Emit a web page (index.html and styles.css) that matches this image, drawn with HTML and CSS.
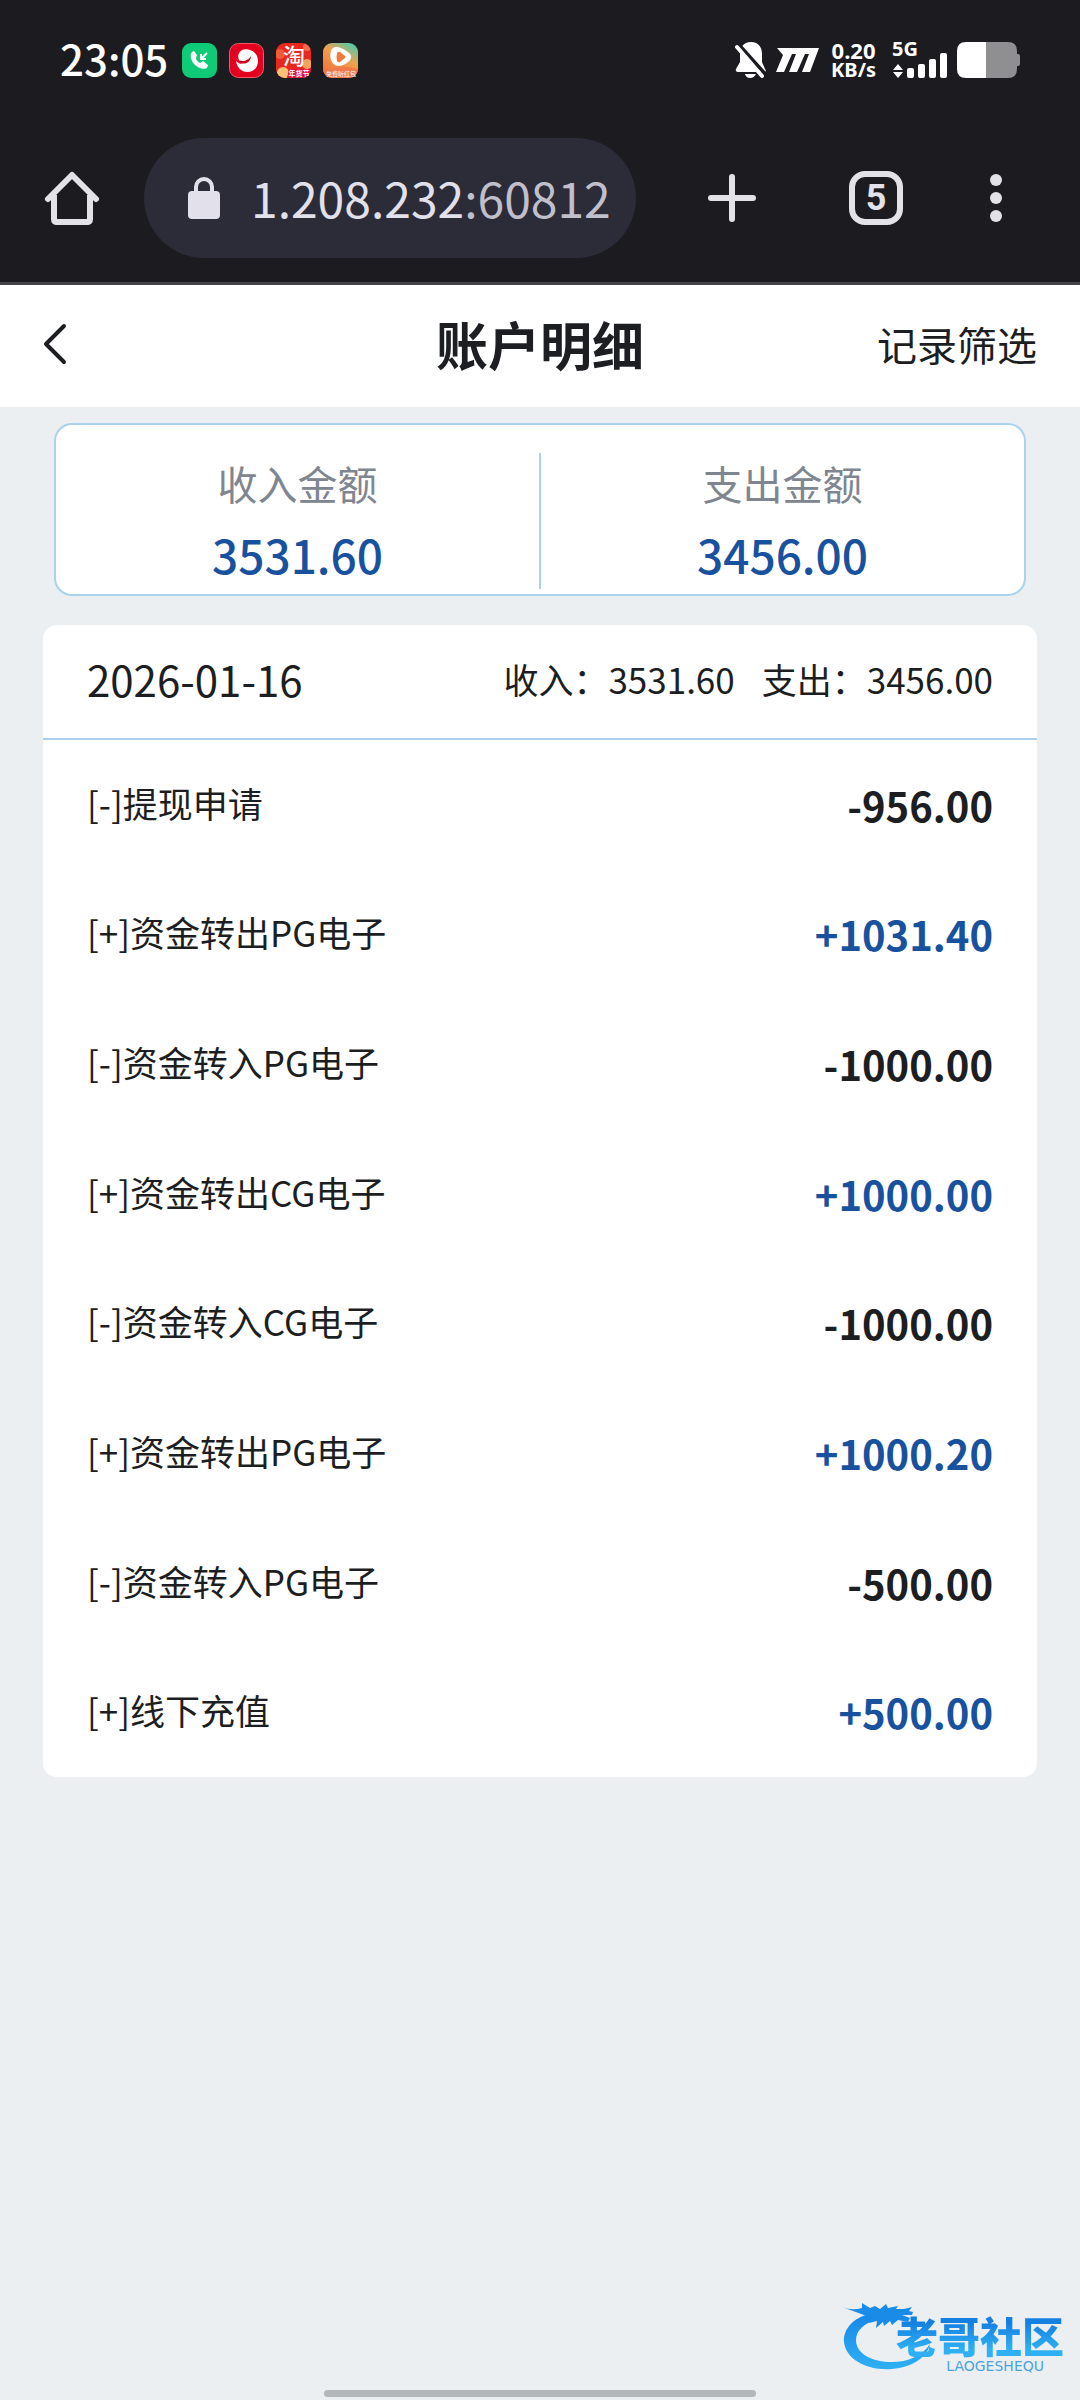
FILE: index.html
```html
<!DOCTYPE html>
<html lang="zh-CN">
<head>
<meta charset="utf-8">
<meta name="viewport" content="width=device-width, initial-scale=1">
<title>账户明细</title>
<link rel="stylesheet" href="styles.css">
</head>
<body>
<div class="screen">
  <div class="status-bar">
    <span class="clock">23:05</span>
    <div class="app-icons">
      <svg width="35" height="35" viewBox="0 0 35 35" aria-hidden="true">
        <rect width="35" height="35" rx="9" fill="#0fcb78"/>
        <path d="M10 9c-2 2-2 7 2 12 4 4 9 6 13 4l1-3-5-4-3 2c-2-1-4-3-4-5l1-3-3-4z" fill="#fff"/>
        <path d="M25 10l-5 5m-1-4v5h5" fill="none" stroke="#fff" stroke-width="2"/>
      </svg>
      <svg width="35" height="35" viewBox="0 0 35 35" aria-hidden="true">
        <rect x="0.500" y="0.500" width="34" height="34" rx="9" fill="#e60020" stroke="#ee5a66"/>
        <path d="M13 7C17 5 29 7 29 18c0 7-5 11-11 11-5 0-10-4-11-11 2 2 4 3 6 3C9 18 7 11 13 7z" fill="#fff"/>
        <path d="M9 17c5 2 10 1 13-4 0 6-6 10-12 6z" fill="#d0001c"/>
      </svg>
      <svg width="35" height="35" viewBox="0 0 35 35" aria-hidden="true">
        <defs>
          <clipPath id="tile"><rect width="35" height="35" rx="9"/></clipPath>
          <linearGradient id="sunset" x1="0.900" y1="0" x2="0.300" y2="1">
            <stop offset="0" stop-color="#3fd0b4"/><stop offset="0.450" stop-color="#f2a04e"/><stop offset="1" stop-color="#f2703a"/>
          </linearGradient>
        </defs>
        <g clip-path="url(#tile)">
          <rect width="35" height="35" fill="#e8281e"/>
          <circle cx="4" cy="11" r="5" fill="#f25a3a"/>
          <circle cx="31" cy="21" r="5" fill="#f7a25a"/>
          <circle cx="7" cy="30" r="6" fill="#fbc277"/>
          <circle cx="31" cy="4" r="4" fill="#f56a48"/>
          <path d="M13 26h22v9H11z" fill="#e0103c"/>
        </g>
        <text x="18" y="21" class="tao" text-anchor="middle">淘</text>
        <text x="23" y="33" class="tao-sub" text-anchor="middle">年货节</text>
      </svg>
      <svg width="35" height="35" viewBox="0 0 35 35" aria-hidden="true">
        <g clip-path="url(#tile)">
          <rect width="35" height="35" fill="url(#sunset)"/>
          <path d="M0 27q17-6 35-1v9H0z" fill="#f07a48"/>
          <path d="M8 8c1-5 7-5 12-2s9 5 8 9-8 8-12 8-7-3-8-6-1-6 0-9z" fill="#fff"/>
          <path d="M14 10q1-2 3-1l5 4q1 1 0 2l-5 4q-2 1-3-1-1-4 0-8z" fill="#ee7a3c"/>
        </g>
        <text x="18" y="33" class="tile-sub" text-anchor="middle">免费听红包</text>
      </svg>
    </div>
    <div class="indicators">
      <svg width="32" height="36" viewBox="0 0 32 36" aria-hidden="true">
        <path d="M16 0C8 0 5 6 5 12v8l-4 7q-1 3 2 3h26q3 0 1-3l-3-7v-8C27 6 24 0 16 0z" fill="#fff"/>
        <path d="M10 32h11q-2 4-6 4t-5-4z" fill="#fff"/>
        <path d="M4 3l26 29" stroke="#1b1b20" stroke-width="4"/>
        <path d="M2 5l25 29" stroke="#fff" stroke-width="4" stroke-linecap="round"/>
      </svg>
      <svg width="43" height="24" viewBox="0 0 43 24" aria-hidden="true">
        <path d="M1 0h42l-9 24h-8l7-18h-4l-8 18h-8l7-18h-4L8 24H0L7 7z" fill="#fff"/>
      </svg>
      <div class="net-speed"><span class="net-value">0.20</span><span class="net-unit">KB/s</span></div>
      <div class="signal">
        <span class="net-type">5G</span>
        <svg width="56" height="36" viewBox="0 0 56 36" aria-hidden="true">
          <path d="M1 28l5-6 5 6zM1 30h10l-5 6z" fill="#fff"/>
          <rect x="15" y="26" width="7" height="10" rx="2" fill="#fff"/>
          <rect x="26" y="22" width="7" height="14" rx="2" fill="#fff"/>
          <rect x="37" y="17" width="7" height="19" rx="2" fill="#fff"/>
          <rect x="48" y="11" width="7" height="25" rx="2" fill="#fff"/>
        </svg>
      </div>
      <svg width="63" height="36" viewBox="0 0 63 36" aria-hidden="true">
        <path d="M29 0h22q9 0 9 9v3h1q2 0 2 2v8q0 2-2 2h-1v3q0 9-9 9H29z" fill="#8f8f91"/>
        <path d="M9 0h20v36H9q-9 0-9-9V9q0-9 9-9z" fill="#fff"/>
      </svg>
    </div>
  </div>

  <div class="browser-bar">
    <button class="icon-button" type="button" aria-label="主页">
      <svg width="54" height="54" viewBox="0 0 54 54" aria-hidden="true">
        <path d="M9 24v24q0 3 3 3h30q3 0 3-3V24" fill="none" stroke="#e3e2e9" stroke-width="6"/>
        <path d="M3 28L27 4l24 24" fill="none" stroke="#e3e2e9" stroke-width="6" stroke-linecap="round" stroke-linejoin="round"/>
      </svg>
    </button>
    <a class="address" href="#">
      <svg width="32" height="42" viewBox="0 0 32 42" aria-hidden="true">
        <rect y="14" width="32" height="28" rx="4" fill="#e2e0ea"/>
        <path d="M8 16V10a8 8 0 0 1 16 0v6" fill="none" stroke="#e2e0ea" stroke-width="4"/>
      </svg>
      <span class="url">1.208.232<span class="port">:60812</span></span>
    </a>
    <div class="browser-actions">
      <button class="icon-button" type="button" aria-label="新建标签页">
        <svg width="48" height="48" viewBox="0 0 48 48" aria-hidden="true">
          <path d="M24 3v42M3 24h42" stroke="#e3e2e9" stroke-width="6" stroke-linecap="round"/>
        </svg>
      </button>
      <button class="tab-count" type="button" aria-label="5 个标签页">5</button>
      <button class="icon-button" type="button" aria-label="更多">
        <svg width="12" height="48" viewBox="0 0 12 48" aria-hidden="true">
          <g fill="#e3e2e9"><circle cx="6" cy="6" r="6"/><circle cx="6" cy="24" r="6"/><circle cx="6" cy="42" r="6"/></g>
        </svg>
      </button>
    </div>
  </div>

  <header class="page-header">
    <button class="back" type="button" aria-label="返回">
      <svg width="24" height="40" viewBox="0 0 24 40" aria-hidden="true">
        <path d="M21 2L3 20l18 18" fill="none" stroke="#1c1e21" stroke-width="4" stroke-linecap="round" stroke-linejoin="round"/>
      </svg>
    </button>
    <h1 class="title">账户明细</h1>
    <button class="filter" type="button">记录筛选</button>
  </header>

  <main class="content">
    <section class="summary">
      <div class="summary-item"><span class="summary-label">收入金额</span><strong class="summary-value">3531.60</strong></div>
      <div class="summary-item"><span class="summary-label">支出金额</span><strong class="summary-value">3456.00</strong></div>
    </section>

    <section class="day-card">
      <div class="day-head">
        <h2 class="day-date">2026-01-16</h2>
        <div class="day-totals"><span>收入：3531.60</span><span>支出：3456.00</span></div>
      </div>
      <ul class="records">
        <li class="record"><span class="record-name">[-]提现申请</span><span class="amount">-956.00</span></li>
        <li class="record"><span class="record-name">[+]资金转出PG电子</span><span class="amount amount-in">+1031.40</span></li>
        <li class="record"><span class="record-name">[-]资金转入PG电子</span><span class="amount">-1000.00</span></li>
        <li class="record"><span class="record-name">[+]资金转出CG电子</span><span class="amount amount-in">+1000.00</span></li>
        <li class="record"><span class="record-name">[-]资金转入CG电子</span><span class="amount">-1000.00</span></li>
        <li class="record"><span class="record-name">[+]资金转出PG电子</span><span class="amount amount-in">+1000.20</span></li>
        <li class="record"><span class="record-name">[-]资金转入PG电子</span><span class="amount">-500.00</span></li>
        <li class="record"><span class="record-name">[+]线下充值</span><span class="amount amount-in">+500.00</span></li>
      </ul>
    </section>
  </main>

  <div class="watermark">
    <svg class="dragon" width="90" height="70" viewBox="0 0 90 70" aria-hidden="true">
      <defs>
        <linearGradient id="scale" x1="0" y1="0" x2="0" y2="1">
          <stop offset="0" stop-color="#1687e6"/><stop offset="1" stop-color="#2fb0f5"/>
        </linearGradient>
      </defs>
      <path d="M32 10C12 13 1 26 2 39c2 18 24 29 48 27 20-2 35-11 38-25-8 12-22 18-38 18-20 0-36-8-36-22 0-10 9-17 20-20z" fill="url(#scale)"/>
      <path d="M0 4q10 4 20 1l0-5 8 5 5-2 5 3 6-5 2 4 10-2-2 3 8 0 8-2-3 4 4 1-1 3-10 0 8 3-2 4-10-2-6 5-2-4-6 5-1-4-7 6 1-7-8 2 3-5q-16-6-30-11z" fill="#1b8be8"/>
    </svg>
    <div class="wordmark"><span class="wordmark-name">老哥社区</span><span class="wordmark-latin">LAOGESHEQU</span></div>
  </div>
  <div class="home-indicator"></div>
</div>
</body>
</html>
```
FILE: styles.css
```css
* { box-sizing: border-box; }

body {
  margin: 0;
  background: #ebeff2;
  color: #1c1e21;
  font-family: "Noto Sans CJK SC", "Noto Sans", sans-serif;
}

button {
  padding: 0;
  border: 0;
  background: none;
  color: inherit;
  font-family: inherit;
}

svg { display: block; flex: none; overflow: visible; }

.screen {
  position: relative;
  min-height: 100vh;
}

/* Phone status bar */
.status-bar {
  display: flex;
  align-items: center;
  height: 120px;
  padding: 0 60px;
  background: #1b1b20;
  color: #fff;
}

.clock {
  padding-bottom: 4px;
  font-size: 42px;
  font-weight: 500;
  line-height: 60px;
}

.app-icons {
  display: flex;
  gap: 12px;
  margin-left: 14px;
}

.tao { fill: #fff; font-size: 22px; font-weight: 500; }
.tao-sub { fill: #fff; font-size: 7px; font-weight: 700; }
.tile-sub { fill: #fff; font-size: 6px; }

.indicators {
  display: flex;
  align-items: center;
  margin-left: auto;
  gap: 9px;
}

.net-speed {
  display: flex;
  flex-direction: column;
  align-items: center;
  margin-left: 3px;
  font-family: "Noto Sans", sans-serif;
  font-weight: 700;
  line-height: 20px;
}

.net-value { font-size: 22px; }
.net-unit { font-size: 20px; }

.signal { position: relative; margin-left: 7px; }

.net-type {
  position: absolute;
  top: -3px;
  left: 0;
  font-family: "Noto Sans", sans-serif;
  font-size: 20px;
  font-weight: 700;
  line-height: 20px;
}

/* Browser toolbar */
.browser-bar {
  display: flex;
  align-items: center;
  height: 165px;
  padding: 0 78px 6px 45px;
  border-bottom: 3px solid #444448;
  background: #1b1b20;
}

.address {
  display: flex;
  flex: 1;
  align-items: center;
  height: 120px;
  margin-left: 45px;
  padding-left: 44px;
  border-radius: 60px;
  background: #2b2c38;
  color: #e2e0ea;
  text-decoration: none;
}

.url {
  margin-left: 31px;
  padding-bottom: 2px;
  font-size: 48px;
  line-height: 60px;
}

.port { color: #c0bfca; }

.browser-actions {
  display: flex;
  align-items: center;
  margin-left: 72px;
}

.tab-count {
  width: 54px;
  height: 54px;
  margin: 0 87px 0 93px;
  border: 6px solid #e3e2e9;
  border-radius: 16px;
  color: #e3e2e9;
  font-family: Roboto, sans-serif;
  font-size: 36px;
  font-weight: 700;
  line-height: 42px;
}

/* Page header */
.page-header {
  display: grid;
  grid-template-columns: 1fr auto 1fr;
  align-items: center;
  height: 122px;
  padding: 0 43px 4px;
  background: #fff;
}

.back { justify-self: start; }

.title {
  margin: 0;
  font-size: 52px;
  font-weight: 700;
  line-height: 76px;
}

.filter {
  justify-self: end;
  font-size: 40px;
  line-height: 60px;
}

/* Totals */
.content { padding: 16px 43px; }

.summary {
  display: flex;
  margin: 0 11px;
  padding: 28px 0 5px;
  border: 2px solid #a9d3ea;
  border-radius: 18px;
  background: #fff;
}

.summary-item {
  display: flex;
  flex: 1;
  flex-direction: column;
  align-items: center;
}

.summary-item + .summary-item { border-left: 2px solid #a9d3ea; }

.summary-label {
  color: #80868f;
  font-size: 40px;
  line-height: 60px;
}

.summary-value {
  padding-top: 6px;
  color: #18529f;
  font-size: 46px;
  font-weight: 500;
  line-height: 70px;
}

/* Daily records */
.day-card {
  margin-top: 29px;
  border-radius: 14px;
  background: #fff;
}

.day-head {
  display: flex;
  align-items: center;
  justify-content: space-between;
  height: 115px;
  padding: 0 44px 6px;
  border-bottom: 2px solid #abcfec;
}

.day-date {
  margin: 0;
  font-size: 42px;
  font-weight: 400;
  line-height: 60px;
}

.day-totals {
  display: flex;
  gap: 27px;
  font-size: 35px;
  line-height: 52px;
}

.records {
  display: grid;
  grid-auto-rows: 1fr;
  min-height: 1037px;
  margin: 0;
  padding: 0;
  list-style: none;
}

.record {
  display: flex;
  align-items: center;
  justify-content: space-between;
  padding: 0 44px;
}

.record-name {
  padding-bottom: 4px;
  font-size: 35px;
  line-height: 52px;
}

.amount {
  font-size: 40px;
  font-weight: 700;
  line-height: 60px;
}

.amount-in { color: #18529f; }

/* Overlays */
.watermark {
  position: absolute;
  right: 16px;
  bottom: 27px;
  width: 222px;
  height: 70px;
}

.wordmark {
  position: absolute;
  top: 8px;
  right: 0;
  display: flex;
  flex-direction: column;
  align-items: flex-end;
}

.wordmark-name {
  background: linear-gradient(#1480e2 25%, #30b0f4 80%);
  background-clip: text;
  color: transparent;
  font-size: 42px;
  font-weight: 900;
  line-height: 48px;
}

.wordmark-latin {
  margin-right: 20px;
  color: #4aa3e0;
  font-family: "DejaVu Sans", sans-serif;
  font-size: 14px;
  line-height: 14px;
}

.home-indicator {
  position: absolute;
  bottom: 3px;
  left: 30%;
  width: 40%;
  height: 7px;
  border-radius: 4px;
  background: #b2b7ba;
}
```
